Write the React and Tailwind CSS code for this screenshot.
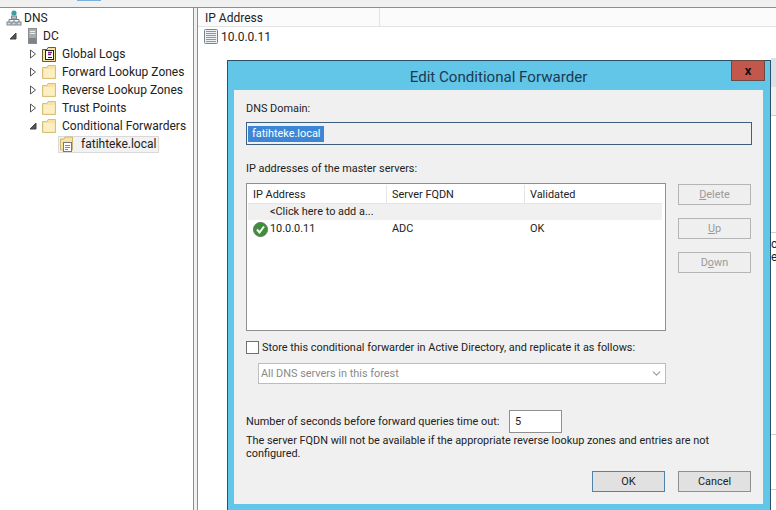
import { ChevronDown } from "lucide-react";

function Arrow({ open }) {
  if (open) {
    return (
      <svg width="8" height="8" viewBox="0 0 8 8" className="shrink-0">
        <path d="M7 1V7H1Z" fill="#555" stroke="#444" />
      </svg>
    );
  }
  return (
    <svg width="8" height="10" viewBox="0 0 8 10" className="shrink-0">
      <path d="M1.5 1L6.5 5L1.5 9Z" fill="#fff" stroke="#555" />
    </svg>
  );
}

function Folder() {
  return (
    <svg width="14" height="14" viewBox="0 0 14 14" className="shrink-0">
      <path d="M0.5 2.5H5L6 0.5H13.5V13.5H0.5Z" fill="#f8e3a2" stroke="#d8c078" />
      <path d="M2 4H12.5V12.5H2Z" fill="#fcefc4" />
    </svg>
  );
}

function LogsIcon() {
  return (
    <svg width="14" height="15" viewBox="0 0 14 15" className="shrink-0">
      <path d="M0.5 2.5H5L6 0.5H13.5V14.5H0.5Z" fill="#f8e3a2" stroke="#6b5a2c" />
      <rect x="3.5" y="3.5" width="8" height="9" fill="#fff" stroke="#222" />
      <path d="M6 5.5H10M6 7.5H9" stroke="#7a2b8c" strokeWidth="1.4" />
      <path d="M6 10.5H10" stroke="#222" />
    </svg>
  );
}

function ZoneIcon() {
  return (
    <svg width="15" height="16" viewBox="0 0 15 16" className="shrink-0">
      <path d="M0.5 3H4L5 1H12.5V14H0.5Z" fill="#f8e3a2" stroke="#cdb671" />
      <rect x="3.5" y="6.5" width="8" height="9" fill="#fff" stroke="#777" />
      <path d="M5 9.5H10M5 11.5H10M5 13.5H8" stroke="#888" />
    </svg>
  );
}

function DnsIcon() {
  return (
    <svg width="16" height="16" viewBox="0 0 16 16" className="shrink-0">
      <circle cx="8" cy="3" r="2.6" fill="#3f9c9c" />
      <path d="M8 6V9M3 12V9.5H13V12M8 9.5V12" stroke="#777" fill="none" />
      <rect x="5.5" y="6" width="5" height="3" fill="#b9c4cc" stroke="#7c8790" />
      <rect x="1" y="12" width="4" height="3" fill="#cfd6db" stroke="#7c8790" />
      <rect x="6" y="12" width="4" height="3" fill="#cfd6db" stroke="#7c8790" />
      <rect x="11" y="12" width="4" height="3" fill="#cfd6db" stroke="#7c8790" />
    </svg>
  );
}

function ServerIcon() {
  return (
    <svg width="10" height="16" viewBox="0 0 10 16" className="shrink-0">
      <rect x="0.5" y="0.5" width="8" height="15" fill="#a9adb0" stroke="#8a8e90" />
      <path d="M2 3.5H7M2 5.5H7" stroke="#eceeef" />
      <rect x="1" y="10" width="7" height="5" fill="#7d8285" />
    </svg>
  );
}

function RecordIcon() {
  return (
    <svg width="14" height="15" viewBox="0 0 14 15" className="shrink-0">
      <rect x="0.5" y="0.5" width="13" height="14" rx="1" fill="#eef1f3" stroke="#77828a" />
      <path d="M2 2.5H12M2 4.5H12M2 6.5H12M2 8.5H12M2 10.5H12M2 12.5H12" stroke="#8c98a0" />
    </svg>
  );
}

function CheckIcon() {
  return (
    <svg width="15" height="15" viewBox="0 0 15 15" className="shrink-0">
      <circle cx="7.5" cy="7.5" r="7" fill="#3f8f3a" stroke="#5b7a58" />
      <path d="M4 7.5L6.5 10.5L11 4.5" fill="none" stroke="#fff" strokeWidth="2" />
    </svg>
  );
}

function TreeRow({ indent, arrow, icon, label, selected }) {
  return (
    <div className={`flex h-[18px] items-center ${indent}`}>
      <div className="flex w-[13px] shrink-0 items-center">{arrow}</div>
      <div className={`flex h-[17px] items-center gap-[6px] pr-[2px] ${selected ? "border border-[#d9d9d9] bg-[#f2f2f2] pl-[1px]" : ""}`}>
        {icon}
        <span className="whitespace-nowrap">{label}</span>
      </div>
    </div>
  );
}

function SideButton({ children }) {
  return (
    <button className="h-[21px] w-[73px] border border-[#b5b5b5] bg-[#efefef] text-center text-[#9a9a9a]">
      {children}
    </button>
  );
}

export default function App() {
  return (
    <div className="relative h-[510px] w-[776px] overflow-hidden bg-[#f0f0f0] font-['Roboto',sans-serif] text-[12px] leading-[16px] text-[#222]">
      {/* toolbar strip */}
      <div className="h-[8px] border-b border-[#8d8d8d]">
        <div className="ml-[77px] h-[1px] w-[24px] bg-[#7fb0d8]" />
      </div>

      <div className="flex h-[502px]">
        {/* tree */}
        <div className="w-[194px] shrink-0 border-r border-[#8d8d8d] bg-white pl-[6px] pt-[1px]">
          <div className="flex h-[18px] items-center gap-[2px]">
            <DnsIcon />
            <span>DNS</span>
          </div>
          <TreeRow indent="pl-[3px]" arrow={<Arrow open />} icon={<span className="ml-[6px] mr-[-1px] flex"><ServerIcon /></span>} label="DC" />
          <TreeRow indent="pl-[23px]" arrow={<Arrow />} icon={<LogsIcon />} label="Global Logs" />
          <TreeRow indent="pl-[23px]" arrow={<Arrow />} icon={<Folder />} label="Forward Lookup Zones" />
          <TreeRow indent="pl-[23px]" arrow={<Arrow />} icon={<Folder />} label="Reverse Lookup Zones" />
          <TreeRow indent="pl-[23px]" arrow={<Arrow />} icon={<Folder />} label="Trust Points" />
          <TreeRow indent="pl-[23px]" arrow={<Arrow open />} icon={<Folder />} label="Conditional Forwarders" />
          <TreeRow indent="pl-[39px]" arrow={null} icon={<ZoneIcon />} label="fatihteke.local" selected />
        </div>

        {/* results pane */}
        <div className="ml-[3px] flex-1 border-l border-[#8d8d8d] bg-white">
          <div className="flex h-[19px] border-b border-[#e3e3e3] bg-[#fbfbfb]">
            <div className="w-[182px] border-r border-[#e3e3e3] pl-[7px] leading-[20px]">IP Address</div>
          </div>
          <div className="flex h-[19px] items-center gap-[3px] pl-[6px]">
            <RecordIcon />
            <span>10.0.0.11</span>
          </div>
        </div>
      </div>

      {/* slivers of the pane behind the dialog */}
      <div className="absolute left-[771px] top-[58px] flex h-[452px] w-[5px] flex-col overflow-hidden bg-white">
        <div className="h-[29px] shrink-0 bg-[#d8e2e8]" />
        <div className="h-[29px] shrink-0 border-b border-[#cfcfcf] bg-[#f0f0f0]" />
        <div className="mt-[116px] h-[1px] shrink-0 bg-[#cfcfcf]" />
        <div className="mt-[5px] shrink-0 leading-[13px] text-[#222]">c</div>
        <div className="shrink-0 leading-[13px] text-[#222]">e</div>
        <div className="mt-[170px] h-[1px] shrink-0 bg-[#cfcfcf]" />
        <div className="mt-[54px] h-[1px] shrink-0 bg-[#cfcfcf]" />
      </div>

      {/* dialog */}
      <div className="absolute left-[227px] top-[60px] h-[460px] w-[544px] border border-[#2e4f66] bg-[#62c6e8] pl-[6px] pr-[7px] text-[10.9px]">
        <div className="relative h-[29px] pt-[7px] text-center text-[15.1px] leading-[18px] text-[#1c3a4f]">
          Edit Conditional Forwarder
          <div className="absolute right-[-2px] top-[-1px] flex h-[21px] w-[34px] items-center justify-center border border-[#6b4a45] bg-[#c4574c] text-[13px] font-bold leading-none text-[#111]">
            x
          </div>
        </div>

        <div className="h-[414px] bg-[#f0f0f0] pl-[12px] pr-[11px] pt-[11px]">
          <div className="h-[16px]">DNS Domain:</div>
          <div className="mt-[5px] flex h-[23px] w-[506px] items-center border border-[#3f5f7f] pl-[1px]">
            <span className="bg-[#3d86d6] px-[4px] leading-[16px] text-white">fatihteke.local</span>
          </div>

          <div className="mt-[16px] h-[16px]">IP addresses of the master servers:</div>

          <div className="mt-[6px] flex">
            <div className="h-[148px] w-[420px] border border-[#8f8f8f] bg-white pl-[1px] pr-[3px] pt-[1px]">
              <div className="flex h-[19px] border-b border-[#e5e5e5] leading-[19px]">
                <div className="w-[139px] border-r border-[#e5e5e5] pl-[5px]">IP Address</div>
                <div className="w-[138px] border-r border-[#e5e5e5] pl-[5px]">Server FQDN</div>
                <div className="pl-[5px]">Validated</div>
              </div>
              <div className="flex h-[16px] items-center bg-[#f0f0f0] pl-[22px]">&lt;Click here to add a...</div>
              <div className="mt-[1px] flex h-[16px] items-center">
                <div className="flex w-[139px] items-center gap-[2px] pl-[5px]">
                  <CheckIcon />
                  <span>10.0.0.11</span>
                </div>
                <div className="w-[138px] pl-[5px]">ADC</div>
                <div className="pl-[5px]">OK</div>
              </div>
            </div>
            <div className="ml-[12px] flex flex-col gap-[13px] pt-[1px]">
              <SideButton><span className="underline">D</span>elete</SideButton>
              <SideButton><span className="underline">U</span>p</SideButton>
              <SideButton>D<span className="underline">o</span>wn</SideButton>
            </div>
          </div>

          <div className="mt-[10px] flex h-[13px] items-center gap-[3px]">
            <div className="h-[13px] w-[13px] shrink-0 border border-[#707070] bg-white" />
            <span className="whitespace-nowrap">Store this conditional forwarder in Active Directory, and replicate it as follows:</span>
          </div>

          <div className="ml-[12px] mt-[9px] flex h-[21px] w-[408px] items-center justify-between border border-[#bdbdbd] bg-white pl-[2px] pr-[2px] text-[#8a8a8a]">
            <span>All DNS servers in this forest</span>
            <ChevronDown size={13} color="#9a9a9a" strokeWidth={2} />
          </div>

          <div className="mt-[26px] flex h-[23px] items-center">
            <span className="w-[263px] whitespace-nowrap">Number of seconds before forward queries time out:</span>
            <div className="flex h-[23px] w-[53px] items-center border border-[#8f8f8f] bg-white pl-[5px]">5</div>
          </div>

          <p className="mt-[1px] w-[490px] leading-[13px]">
            The server FQDN will not be available if the appropriate reverse lookup zones and entries are not configured.
          </p>

          <div className="mt-[11px] flex justify-end gap-[13px] pr-[1px]">
            <button className="h-[21px] w-[73px] border border-[#4f83a8] bg-[#e1e1e1] text-center">OK</button>
            <button className="h-[21px] w-[73px] border border-[#8f8f8f] bg-[#e1e1e1] text-center">Cancel</button>
          </div>
        </div>
      </div>
    </div>
  );
}
